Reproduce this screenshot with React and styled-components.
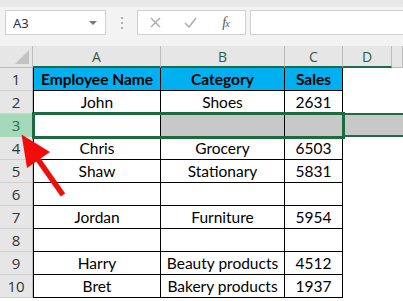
import React from "react"
import styled, { createGlobalStyle } from "styled-components"

// ------------------------------------------------
// SHEET DATA
// ------------------------------------------------

const headerRow = ["Employee Name", "Category", "Sales"]

const dataRows = [
  ["John", "Shoes", "2631"],
  ["", "", ""],
  ["Chris", "Grocery", "6503"],
  ["Shaw", "Stationary", "5831"],
  ["", "", ""],
  ["Jordan", "Furniture", "5954"],
  ["", "", ""],
  ["Harry", "Beauty products", "4512"],
  ["Bret", "Bakery products", "1937"],
]

const SELECTED_ROW = 3

const GlobalStyle = createGlobalStyle`
  html, body {
    margin: 0;
    padding: 0;
    background: #ffffff;
    overflow: hidden;
  }
  body {
    font-family: "Noto Sans", "Liberation Sans", sans-serif;
  }
`

const Page = styled.div`
  position: relative;
  width: 403px;
  height: 301px;
  overflow: hidden;
  background: #ffffff;
`

// ------------------------------------------------
// FORMULA BAR
// ------------------------------------------------

const Toolbar = styled.div`
  display: flex;
  align-items: flex-start;
  height: 46px;
  box-sizing: border-box;
  padding: 10px 0 0 5px;
  background: linear-gradient(#e7e7e7 0, #e9e9e9 7px, #f3f3f3 7px, #f3f3f3 100%);
`

const Field = styled.div`
  display: flex;
  align-items: center;
  height: 25px;
  box-sizing: border-box;
  background: #ffffff;
  border: 1px solid #d0d0d0;
  width: ${p => (p.$width ? `${p.$width}px` : "auto")};
  flex: ${p => (p.$grow ? 1 : "none")};
  margin-left: ${p => (p.$grow ? "4px" : "0")};
  border-right: ${p => (p.$grow ? "none" : "1px solid #d0d0d0")};
`

const NameText = styled.span`
  flex: 1;
  padding-left: 7px;
  font-size: 13px;
  color: #333333;
`

const Caret = styled.span`
  width: 0;
  height: 0;
  margin-right: 8px;
  border-left: 4px solid transparent;
  border-right: 4px solid transparent;
  border-top: 4px solid #777777;
`

const Dots = styled.div`
  width: 31px;
  height: 25px;
  display: flex;
  flex-direction: column;
  align-items: center;
  justify-content: center;
  gap: 3px;

  span {
    width: 2px;
    height: 2px;
    background: #b0b0b0;
  }
`

const FxButton = styled.span`
  width: 35px;
  display: flex;
  justify-content: center;
`

const FxText = styled.span`
  font-family: "Liberation Serif", serif;
  font-style: italic;
  font-size: 14px;
  color: #555555;
  letter-spacing: -1px;

  small {
    font-size: 10px;
  }
`

// ------------------------------------------------
// GRID
// ------------------------------------------------

const Grid = styled.div`
  display: grid;
  grid-template-columns: 33px 128px 124px 58px 49px 1fr;
  grid-template-rows: 22px repeat(10, 23px);
  font-family: Lato, "Liberation Sans", sans-serif;
`

const Corner = styled.div`
  position: relative;
  grid-row: 1;
  grid-column: 1;
  background: #e6e6e6;
  border-right: 1px solid #bdbdbd;
  border-bottom: 1px solid #bdbdbd;

  &::after {
    content: "";
    position: absolute;
    right: 3px;
    bottom: 3px;
    width: 0;
    height: 0;
    border-left: 14px solid transparent;
    border-bottom: 14px solid #c2c2c2;
  }
`

const ColHead = styled.div`
  grid-row: 1;
  grid-column: ${p => p.$col};
  display: flex;
  align-items: center;
  justify-content: center;
  box-sizing: border-box;
  background: #e6e6e6;
  border-right: 1px solid #bcbcbc;
  border-bottom: ${p => (p.$active ? "2px solid #1e6c46" : "1px solid #bcbcbc")};
  font-family: "Open Sans", "Noto Sans", sans-serif;
  font-size: 14px;
  color: ${p => (p.$active ? "#2e5c46" : "#444444")};
`

const RowHead = styled.div`
  grid-row: ${p => p.$row};
  grid-column: 1;
  display: flex;
  align-items: center;
  justify-content: center;
  box-sizing: border-box;
  background: ${p => (p.$active ? "#a6d8ba" : "#e6e6e6")};
  border-bottom: 1px solid ${p => (p.$active ? "#a6d8ba" : "#d0d0d0")};
  border-right: 1px solid #bcbcbc;
  font-family: "Open Sans", "Noto Sans", sans-serif;
  font-size: 15px;
  color: ${p => (p.$active ? "#217346" : "#333333")};
`

const Cell = styled.div`
  grid-row: ${p => p.$row};
  grid-column: ${p => p.$col};
  display: flex;
  align-items: center;
  justify-content: center;
  box-sizing: border-box;
  white-space: nowrap;
  overflow: hidden;
  font-size: 15.5px;
  font-weight: ${p => (p.$head ? 700 : 400)};
  color: #000000;
  background: ${p => (p.$head ? "#00b0f0" : p.$shade ? "#c8c8c8" : "#ffffff")};
  border-right: 1px solid #000000;
  border-bottom: 1px solid #000000;
  border-left: ${p => (p.$col === 2 ? "1px solid #000000" : "none")};
`

const OpenCell = styled.div`
  grid-row: ${p => p.$row};
  grid-column: ${p => p.$col};
  box-sizing: border-box;
  background: ${p => (p.$shade ? "#c8c8c8" : "#ffffff")};
  border-top: ${p => (p.$shade ? "2px solid #1e6c46" : "none")};
  border-bottom: ${p => (p.$shade ? "2px solid #1e6c46" : "none")};
  margin-top: ${p => (p.$shade ? "-1px" : "0")};
`

const Selection = styled.div`
  grid-row: ${p => p.$row};
  grid-column: 2 / 5;
  margin: -2px -2px -2px -1px;
  border: 3px solid #1b6b3f;
  z-index: 2;
  pointer-events: none;
`

const Arrow = styled.svg`
  position: absolute;
  left: 0;
  top: 0;
  z-index: 5;
  pointer-events: none;
`

const App = () => {
  const allRows = [headerRow, ...dataRows]

  return (
    <>
      <GlobalStyle />
      <Page>
        <Toolbar>
          <Field $width={101}>
            <NameText>A3</NameText>
            <Caret />
          </Field>
          <Dots>
            <span />
            <span />
            <span />
          </Dots>
          <Field $width={109}>
            <FxButton>
              <svg width="11" height="11" viewBox="0 0 11 11">
                <path d="M1 1 L10 10 M10 1 L1 10" stroke="#a9a9a9" strokeWidth="1.4" fill="none" />
              </svg>
            </FxButton>
            <FxButton>
              <svg width="13" height="11" viewBox="0 0 13 11">
                <path d="M1 6 L5 10 L12 1" stroke="#b0b0b0" strokeWidth="1.6" fill="none" />
              </svg>
            </FxButton>
            <FxButton>
              <FxText>
                f<small>x</small>
              </FxText>
            </FxButton>
          </Field>
          <Field $grow />
        </Toolbar>

        <Grid>
          <Corner />
          {["A", "B", "C", "D"].map((l, i) => (
            <ColHead key={l} $col={i + 2} $active>
              {l}
            </ColHead>
          ))}
          <ColHead $col={6} />

          {allRows.map((row, i) => {
            const n = i + 1
            const gridRow = n + 1
            const sel = n === SELECTED_ROW
            return (
              <React.Fragment key={n}>
                <RowHead $row={gridRow} $active={sel}>
                  {n}
                </RowHead>
                {row.map((v, j) => (
                  <Cell
                    key={j}
                    $row={gridRow}
                    $col={j + 2}
                    $head={i === 0}
                    $shade={sel && j > 0}
                  >
                    {v}
                  </Cell>
                ))}
                <OpenCell $row={gridRow} $col={5} $shade={sel} />
                <OpenCell $row={gridRow} $col={6} $shade={sel} />
              </React.Fragment>
            )
          })}

          <Selection $row={SELECTED_ROW + 1} />
        </Grid>

        <Arrow width="403" height="301" viewBox="0 0 403 301">
          <polygon points="21.5,134.5 27,168 50,152" fill="#f20d0d" />
          <line x1="37" y1="158" x2="63" y2="195" stroke="#f20d0d" strokeWidth="5.5" />
        </Arrow>
      </Page>
    </>
  )
}

export default App
